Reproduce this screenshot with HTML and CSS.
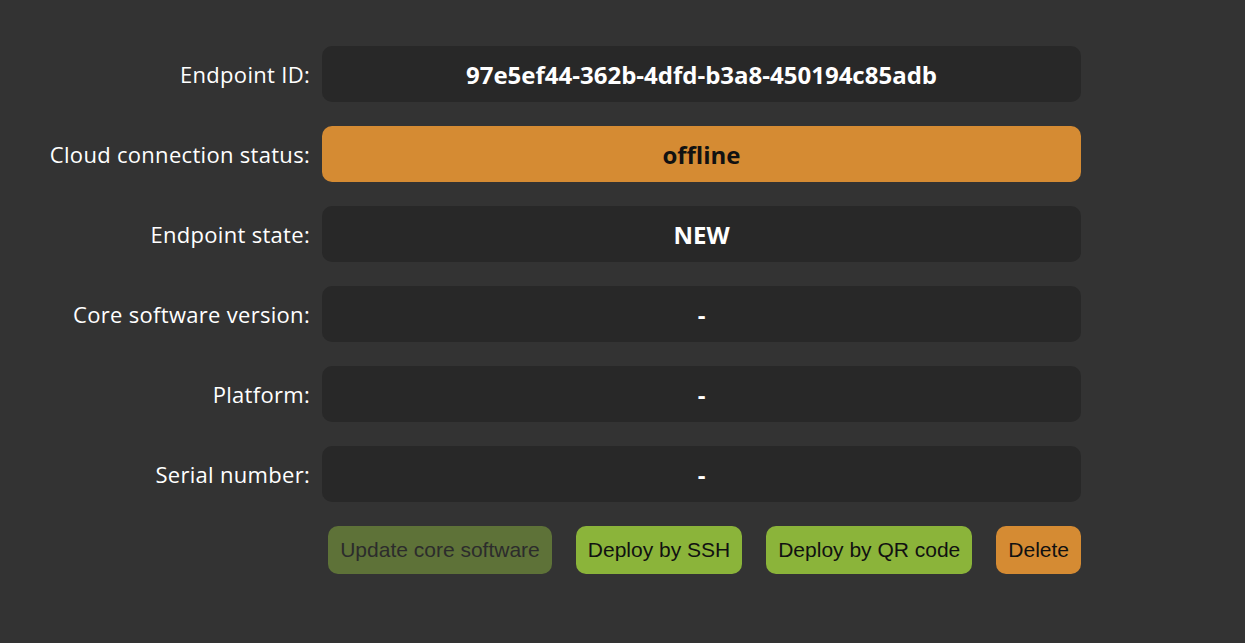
FILE: index.html
```html
<!DOCTYPE html>
<html>
<head>
<meta charset="utf-8">
<link rel="stylesheet" href="styles.css">
</head>
<body>
<div class="panel">
  <div class="row">
    <div class="label">Endpoint ID:</div>
    <div class="value">97e5ef44-362b-4dfd-b3a8-450194c85adb</div>
  </div>
  <div class="row">
    <div class="label">Cloud connection status:</div>
    <div class="value value-offline">offline</div>
  </div>
  <div class="row">
    <div class="label">Endpoint state:</div>
    <div class="value">NEW</div>
  </div>
  <div class="row">
    <div class="label">Core software version:</div>
    <div class="value">-</div>
  </div>
  <div class="row">
    <div class="label">Platform:</div>
    <div class="value">-</div>
  </div>
  <div class="row">
    <div class="label">Serial number:</div>
    <div class="value">-</div>
  </div>
  <div class="row actions-row">
    <div class="label"></div>
    <div class="actions">
      <button class="btn btn-disabled">Update core software</button>
      <button class="btn btn-green">Deploy by SSH</button>
      <button class="btn btn-green">Deploy by QR code</button>
      <button class="btn btn-orange">Delete</button>
    </div>
  </div>
</div>
</body>
</html>
```
FILE: styles.css
```css
html, body {
  margin: 0;
  padding: 0;
  background: #333333;
  height: 100%;
}
body {
  font-family: "Open Sans", "Noto Sans", sans-serif;
  color: #ffffff;
}
.panel {
  display: flex;
  flex-direction: column;
  gap: 24px;
  padding-top: 46px;
}
.row {
  display: grid;
  grid-template-columns: 310px 759px;
  column-gap: 12px;
  align-items: center;
}
.label {
  text-align: right;
  font-size: 22px;
  letter-spacing: 0.3px;
  line-height: 56px;
  white-space: nowrap;
}
.value {
  height: 56px;
  border-radius: 10px;
  background: #282828;
  display: flex;
  align-items: center;
  justify-content: center;
  font-weight: 700;
  font-size: 24px;
}
.value-offline {
  background: #d58b33;
  color: #111111;
}
.actions-row .label {
  line-height: 48px;
}
.actions {
  display: flex;
  justify-content: flex-end;
  gap: 24px;
}
.btn {
  height: 48px;
  border: none;
  border-radius: 10px;
  font-family: "Liberation Sans", Arial, sans-serif;
  font-size: 21px;
  padding: 0 12px;
  color: #111111;
}
.btn-disabled {
  background: #5e7238;
  color: #2c2c2c;
}
.btn-green {
  background: #8bb43a;
}
.btn-orange {
  background: #d58b33;
}
```
